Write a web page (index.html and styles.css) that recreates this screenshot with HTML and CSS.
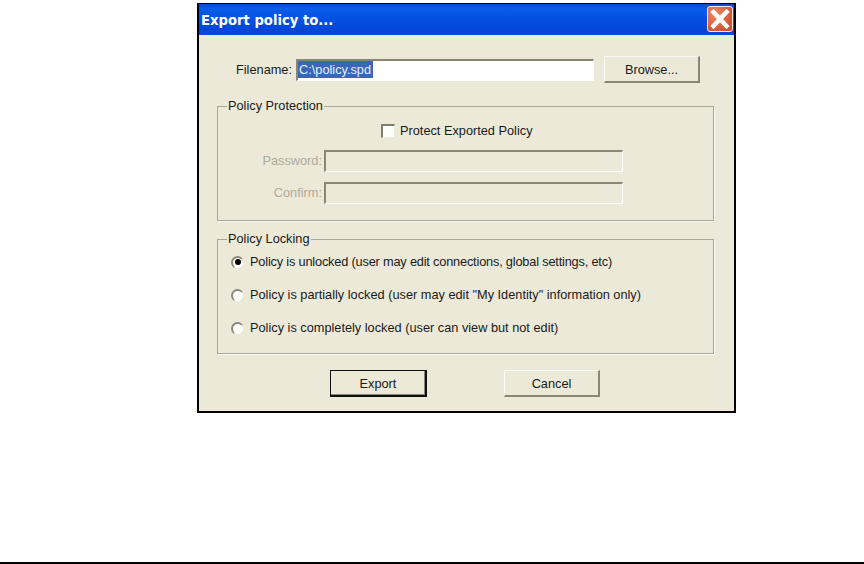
FILE: index.html
```html
<!DOCTYPE html>
<html lang="en">
<head>
<meta charset="utf-8">
<title>Export policy to...</title>
<link rel="stylesheet" href="styles.css">
</head>
<body>
<div class="dialog">
  <div class="titlebar">
    <span class="title">Export policy to...</span>
    <span class="close">
      <svg width="26" height="26" viewBox="0 0 26 26"><path d="M6.500 6 L19.500 20 M19.500 6 L6.500 20" stroke="#fff" stroke-width="4.500" stroke-linecap="square" fill="none"/></svg>
    </span>
  </div>
  <div class="body">
    <div class="file-row">
      <span class="label file-label">Filename:</span>
      <div class="field file-field"><span class="selected">C:\policy.spd</span></div>
      <div class="btn browse">Browse...</div>
    </div>
    <fieldset class="group protection">
      <legend class="legend">Policy Protection</legend>
      <div class="check-row"><span class="checkbox"></span><span class="label">Protect Exported Policy</span></div>
      <div class="pw-row"><span class="label off pw-label">Password:</span><div class="field off-field"></div></div>
      <div class="pw-row"><span class="label off pw-label">Confirm:</span><div class="field off-field"></div></div>
    </fieldset>
    <fieldset class="group locking">
      <legend class="legend">Policy Locking</legend>
      <div class="radio-row"><span class="radio on"></span><span class="label tight">Policy is unlocked (user may edit connections, global settings, etc)</span></div>
      <div class="radio-row"><span class="radio"></span><span class="label">Policy is partially locked (user may edit "My Identity" information only)</span></div>
      <div class="radio-row"><span class="radio"></span><span class="label">Policy is completely locked (user can view but not edit)</span></div>
    </fieldset>
    <div class="actions">
      <div class="btn default">Export</div>
      <div class="btn cancel">Cancel</div>
    </div>
  </div>
</div>
<div class="rule"></div>
</body>
</html>
```
FILE: styles.css
```css
* { box-sizing: border-box; }
html, body { margin: 0; padding: 0; }
body {
  width: 864px;
  height: 564px;
  background: #fff;
  font-family: "Liberation Sans", Arial, sans-serif;
  font-size: 12.75px;
  color: #1a1a1a;
  display: flex;
  flex-direction: column;
  overflow: hidden;
}
.dialog {
  width: 539px;
  height: 410px;
  margin: 3px 0 0 197px;
  border-style: solid;
  border-color: #000;
  border-width: 1px 2px 2px 2px;
  background: #ece9d8;
  display: flex;
  flex-direction: column;
}
.titlebar {
  height: 31px;
  flex: none;
  display: flex;
  align-items: flex-start;
  justify-content: space-between;
  padding: 2px 1px 0 2px;
  background: linear-gradient(#0a48d0 0%, #0a5ce8 15%, #0450e0 50%, #0246d8 85%, #0a48d8 100%);
}
.title {
  font-family: "DejaVu Sans", sans-serif;
  font-weight: bold;
  font-size: 13.2px;
  line-height: 29px;
  color: #fff;
}
.close {
  width: 26px;
  height: 26px;
  border: 1px solid #f4ece4;
  border-radius: 3px;
  background: radial-gradient(circle at 30% 30%, #e98a62, #d4522e 75%);
  display: flex;
  align-items: center;
  justify-content: center;
}
.close svg { flex: none; margin: -1px; }
.body {
  flex: 1;
  display: flex;
  flex-direction: column;
  padding: 0 20px 0 18px;
}
.label { white-space: nowrap; line-height: 14px; }
.tight { letter-spacing: -0.18px; }
.file-row {
  height: 27px;
  margin-top: 21px;
  display: flex;
  align-items: center;
}
.file-label { margin-left: 19px; width: 60px; }
.field {
  height: 22px;
  border-style: solid;
  border-width: 2px 1px 1px 2px;
  border-color: #8a8778 #fff #fff #8a8778;
}
.file-field {
  width: 298px;
  background: #fff;
  display: flex;
  align-items: flex-start;
}
.selected {
  background: #3a66b8;
  color: #e8eefa;
  padding: 0 2px 0 1px;
  height: 17px;
  line-height: 18px;
}
.btn {
  height: 27px;
  display: flex;
  align-items: center;
  justify-content: center;
  background: #ece9d8;
  border-style: solid;
  border-width: 1px 2px 2px 1px;
  border-color: #fbfaf4 #8a8778 #8a8778 #fbfaf4;
}
.browse { width: 96px; margin-left: 10px; }
.group {
  margin: 0;
  padding: 0;
  min-width: 0;
  border: 1px solid #a9a797;
  box-shadow: 1px 1px 0 #fbfaf4;
  display: flex;
  flex-direction: column;
}
.legend { margin-left: 9px; padding: 0 1px; line-height: 14px; }
.protection { height: 122px; margin-top: 16px; margin-bottom: 11px; }
.locking { height: 122px; }
.check-row {
  display: flex;
  align-items: center;
  gap: 5px;
  margin: 11px 0 0 163px;
  height: 14px;
}
.checkbox {
  width: 14px;
  height: 14px;
  background: #fdfdfb;
  border-style: solid;
  border-width: 2px 1px 1px 2px;
  border-color: #7f7d70 #ece9d8 #ece9d8 #7f7d70;
}
.pw-row {
  display: flex;
  align-items: center;
  height: 22px;
  margin-top: 10px;
}
.check-row + .pw-row { margin-top: 12px; }
.pw-label { width: 104px; text-align: right; margin-right: 2px; }
.off { color: #acaa9c; }
.off-field { width: 299px; }
.locking .radio-row:first-of-type { margin-top: 9px; }
.radio-row {
  display: flex;
  align-items: center;
  gap: 6px;
  height: 14px;
  margin: 19px 0 0 13px;
}
.radio {
  position: relative;
  width: 13px;
  height: 13px;
  border-radius: 50%;
  background: #fff;
  border-style: solid;
  border-width: 2px 1px 1px 2px;
  border-color: #8a8778 #ece9d8 #ece9d8 #8a8778;
}
.radio.on::after {
  content: "";
  position: absolute;
  left: 1.500px;
  top: 1.500px;
  width: 6px;
  height: 6px;
  border-radius: 50%;
  background: #000;
}
.actions {
  display: flex;
  margin: 16px 0 0 113px;
}
.default {
  width: 97px;
  border-width: 1px 2px 2px 1px;
  border-color: #111;
  box-shadow: inset -1px -1px 0 #8a8778;
}
.cancel { width: 96px; margin-left: 77px; }
.rule {
  margin-top: auto;
  height: 2px;
  background: #000;
}
```
